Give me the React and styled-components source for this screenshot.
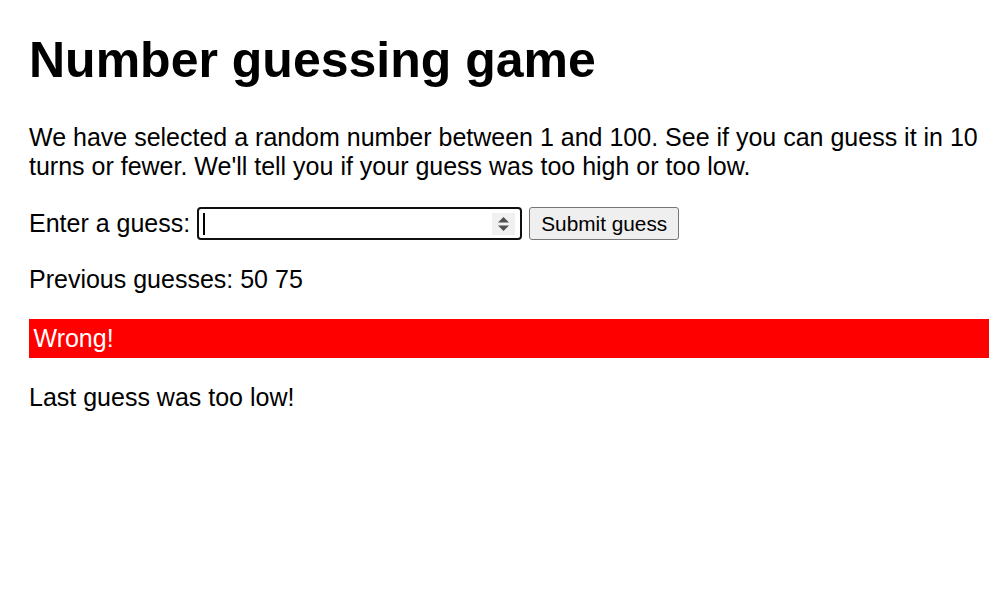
import styled, { createGlobalStyle } from "styled-components";

const GlobalStyle = createGlobalStyle`
  html {
    font-family: "Liberation Sans", Arial, sans-serif;
    font-size: 25px;
  }
  body {
    margin: 0;
    padding: 0 19px 0 29px;
    background: #fff;
    color: #000;
  }
`;

const Title = styled.h1`
  font-size: 50px;
  margin: 31px 0 33.5px;
`;

const Para = styled.p`
  margin: 25px 0;
  color: ${props => props.color || "#000"};
  background: ${props => props.bg || "transparent"};
  padding: ${props => (props.bg ? "5px 4.5px" : "0")};
`;

const FormRow = styled.div`
  display: flex;
  align-items: center;
  height: 33px;
  margin-top: 26.5px;
`;

const Label = styled.label`
  margin-right: 7px;
`;

const NumberBox = styled.div`
  box-sizing: border-box;
  width: 325px;
  height: 33px;
  border: 2px solid #101010;
  border-radius: 4px;
  display: flex;
  align-items: center;
  justify-content: space-between;
  padding: 0 5px 0 4px;
  margin-right: 7px;
`;

const Caret = styled.span`
  width: 2px;
  height: 22px;
  background: #000;
`;

const Spinner = styled.span`
  width: 23px;
  height: 22px;
  background: #f0f0f0;
  display: flex;
  align-items: center;
  justify-content: center;
`;

const SubmitButton = styled.button`
  box-sizing: border-box;
  height: 33px;
  width: 150px;
  font-family: "Liberation Sans", Arial, sans-serif;
  font-size: 20.8px;
  color: #000;
  background: #efefef;
  border: 1px solid #767676;
  border-radius: 3px;
  padding: 0;
`;

export default function App() {
  return (
    <>
      <GlobalStyle />
      <Title>Number guessing game</Title>
      <Para>
        We have selected a random number between 1 and 100. See if you can
        guess it in 10 turns or fewer. We'll tell you if your guess was too
        high or too low.
      </Para>
      <FormRow>
        <Label htmlFor="guessField">Enter a guess:</Label>
        <NumberBox id="guessField">
          <Caret />
          <Spinner>
            <svg width="13" height="16" viewBox="0 0 13 16">
              <path d="M6.5 1 L12 6.5 H1 Z" fill="#505050" />
              <path d="M6.5 15 L12 9.5 H1 Z" fill="#505050" />
            </svg>
          </Spinner>
        </NumberBox>
        <SubmitButton>Submit guess</SubmitButton>
      </FormRow>
      <Para>Previous guesses: 50 75</Para>
      <Para bg="#ff0000" color="#fff">Wrong!</Para>
      <Para>Last guess was too low!</Para>
    </>
  );
}
